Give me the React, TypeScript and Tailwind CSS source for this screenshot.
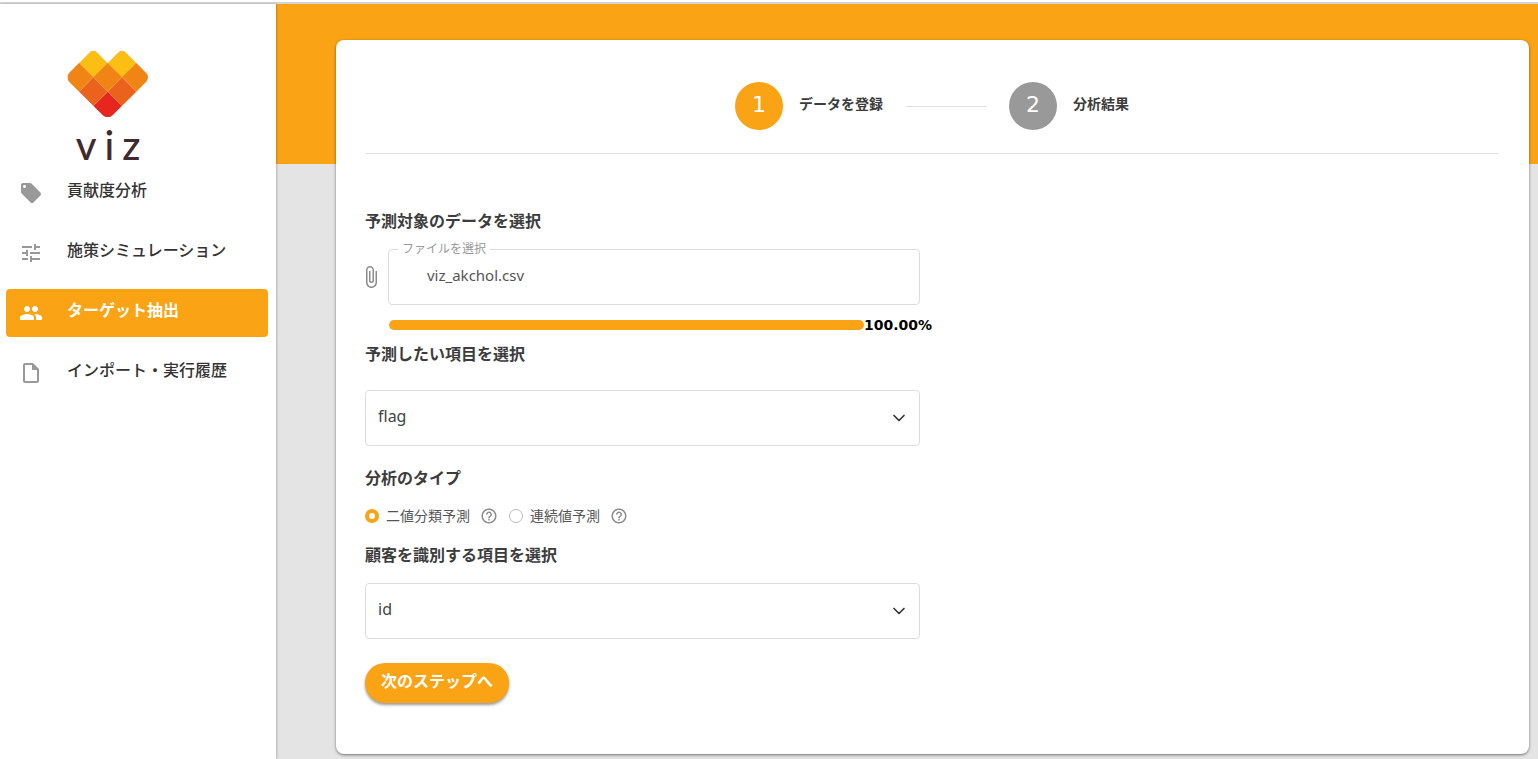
import React, { useState } from "react";
import { ChevronDown } from "lucide-react";
import {
  MdAttachFile,
  MdHelpOutline,
  MdLocalOffer,
  MdOutlineInsertDriveFile,
  MdPeople,
  MdTune,
} from "react-icons/md";
import type { IconType } from "react-icons";

const navItems: { label: string; icon: IconType; active?: boolean }[] = [
  { label: "貢献度分析", icon: MdLocalOffer },
  { label: "施策シミュレーション", icon: MdTune },
  { label: "ターゲット抽出", icon: MdPeople, active: true },
  { label: "インポート・実行履歴", icon: MdOutlineInsertDriveFile },
];

const logoCells = [
  { x: 281, y: 188, fill: "#fbbf14" },
  { x: 367, y: 188, fill: "#fbbf14" },
  { x: 238, y: 230, fill: "#f08515" },
  { x: 324, y: 230, fill: "#f08515" },
  { x: 410, y: 230, fill: "#f08515" },
  { x: 281, y: 273, fill: "#ea621c" },
  { x: 367, y: 273, fill: "#ea621c" },
  { x: 324, y: 316, fill: "#e6261f" },
];

function Logo() {
  return (
    <div className="flex flex-col items-center">
      <svg viewBox="202 148 246 204" className="h-[68px] w-[82px]" aria-hidden="true">
        <clipPath id="heart">
          <path d="M266 157Q281 144 296 157L324 187L352 157Q367 144 382 157L438 214Q452 230 438 246L340 343Q324 357 308 343L210 246Q197 230 210 214Z" />
        </clipPath>
        <g clipPath="url(#heart)">
          {logoCells.map((c) => (
            <path
              key={`${c.x}-${c.y}`}
              d={`M${c.x} ${c.y - 43}l43 43l-43 43l-43 -43z`}
              fill={c.fill}
              stroke="#f6a04a"
              strokeWidth="1"
            />
          ))}
        </g>
      </svg>
      <div className="mt-1 flex gap-2 font-['Lato'] text-[40px] leading-[46px] font-medium text-[#3f2a2d]">
        <span>v</span>
        <span>i</span>
        <span>z</span>
      </div>
    </div>
  );
}

function Sidebar() {
  return (
    <aside className="z-10 w-[276px] shrink-0 bg-white shadow-[1px_0_2px_rgba(0,0,0,0.2)]">
      <div className="flex h-[165px] justify-center pt-[46px] pr-[60px]">
        <Logo />
      </div>
      <nav className="flex flex-col gap-3 pr-2 pl-1.5">
        {navItems.map(({ label, icon: Icon, active }) => (
          <a
            key={label}
            href="#"
            aria-current={active ? "page" : undefined}
            className={
              active
                ? "flex h-12 items-center gap-6 rounded bg-[#faa314] pl-[13px] font-bold text-white"
                : "flex h-12 items-center gap-6 rounded pl-[13px] font-medium text-[#333]"
            }
          >
            <Icon className={active ? "size-6" : "size-6 text-[#999]"} />
            <span className="pb-1.5">{label}</span>
          </a>
        ))}
      </nav>
    </aside>
  );
}

function Step({ n, label, active }: { n: number; label: string; active?: boolean }) {
  return (
    <li className="flex items-center gap-4">
      <span
        className={
          active
            ? "flex size-12 items-center justify-center rounded-full bg-[#faa314] pb-1 font-['DejaVu_Sans'] text-[22px] text-white"
            : "flex size-12 items-center justify-center rounded-full bg-[#999] pb-1 font-['DejaVu_Sans'] text-[22px] text-white"
        }
      >
        {n}
      </span>
      <span className="pb-1 text-sm font-bold">{label}</span>
    </li>
  );
}

function SelectBox({ id, options }: { id: string; options: string[] }) {
  return (
    <div className="relative">
      <select
        id={id}
        className="h-14 w-full appearance-none rounded border border-[#dcdcdc] bg-white px-3 pb-1 text-base text-[#444]"
      >
        {options.map((o) => (
          <option key={o}>{o}</option>
        ))}
      </select>
      <ChevronDown className="pointer-events-none absolute top-[18px] right-[11px] size-5 text-[#333]" />
    </div>
  );
}

function RadioOption({
  label,
  checked,
  onSelect,
}: {
  label: string;
  checked: boolean;
  onSelect: () => void;
}) {
  return (
    <div className="flex items-center gap-2.5">
      <label className="flex items-center gap-[7px] text-sm text-[#555]">
        <input
          type="radio"
          name="analysis-type"
          checked={checked}
          onChange={onSelect}
          className="size-3.5 appearance-none rounded-full border border-[#bbb] bg-white checked:border-4 checked:border-[#faa314]"
        />
        {label}
      </label>
      <button type="button" aria-label={`${label}の説明`}>
        <MdHelpOutline className="size-[18px] text-[#8c8c8c]" />
      </button>
    </div>
  );
}

export default function App() {
  const [type, setType] = useState("二値分類予測");

  return (
    <div className="flex min-h-screen flex-col bg-white font-['Noto_Sans','Noto_Sans_CJK_JP',sans-serif] text-base text-[#3c3c3c]">
      <div className="h-1 border-b-2 border-[#d4d4d4]" />
      <div className="flex flex-1">
        <Sidebar />
        <main className="min-w-0 flex-1 bg-[linear-gradient(#faa314_160px,#e4e4e4_160px)] pt-9 pr-[9px] pb-[5px] pl-[60px]">
          <section className="rounded-lg bg-white pt-[42px] pr-[30px] pb-[51px] pl-[29px] shadow-[0_1px_3px_rgba(0,0,0,0.5)]">
            <ol className="flex items-center justify-center gap-[23px]">
              <Step n={1} label="データを登録" active />
              <li aria-hidden="true" className="h-px w-20 bg-[#e0e0e0]" />
              <Step n={2} label="分析結果" />
            </ol>
            <hr className="mt-[23px] border-[#e0e0e0]" />

            <form className="mt-[55px] w-1/2 pr-3" onSubmit={(e) => e.preventDefault()}>
              <h2 className="leading-6 font-bold">予測対象のデータを選択</h2>
              <div className="mt-2.5 flex items-center">
                <MdAttachFile className="mt-1.5 -ml-1.5 size-6 shrink-0 text-[#8c8c8c]" />
                <fieldset className="ml-[5px] h-[62px] min-w-0 flex-1 rounded border border-[#dcdcdc] px-[9px]">
                  <legend className="px-1 text-xs leading-3 text-[#999]">
                    <label htmlFor="file-name">ファイルを選択</label>
                  </legend>
                  <input
                    id="file-name"
                    type="text"
                    readOnly
                    defaultValue="viz_akchol.csv"
                    className="mt-1 h-8 w-full bg-transparent pl-[29px] text-[15px] text-[#555] outline-none"
                  />
                </fieldset>
              </div>
              <div className="mt-2 -mr-3 ml-6 flex h-6 items-center">
                <div
                  role="progressbar"
                  aria-label="アップロード"
                  aria-valuenow={100}
                  className="h-2.5 flex-1 rounded-full bg-[#faa314]"
                />
                <span className="font-['DejaVu_Sans'] text-sm font-bold text-black">100.00%</span>
              </div>

              <h2 className="mt-[5px] leading-6 font-bold">
                <label htmlFor="target">予測したい項目を選択</label>
              </h2>
              <div className="mt-6">
                <SelectBox id="target" options={["flag"]} />
              </div>

              <h2 className="mt-5 leading-6 font-bold">分析のタイプ</h2>
              <div className="mt-3.5 flex h-6 items-center gap-[11px]">
                {["二値分類予測", "連続値予測"].map((t) => (
                  <RadioOption key={t} label={t} checked={type === t} onSelect={() => setType(t)} />
                ))}
              </div>

              <h2 className="mt-[15px] leading-6 font-bold">
                <label htmlFor="customer">顧客を識別する項目を選択</label>
              </h2>
              <div className="mt-4">
                <SelectBox id="customer" options={["id"]} />
              </div>

              <button
                type="submit"
                className="mt-6 flex h-10 items-center rounded-full bg-[#faa314] px-4 pb-1 font-bold text-white shadow-[0_2px_3px_rgba(0,0,0,0.4)]"
              >
                次のステップへ
              </button>
            </form>
          </section>
        </main>
      </div>
    </div>
  );
}
